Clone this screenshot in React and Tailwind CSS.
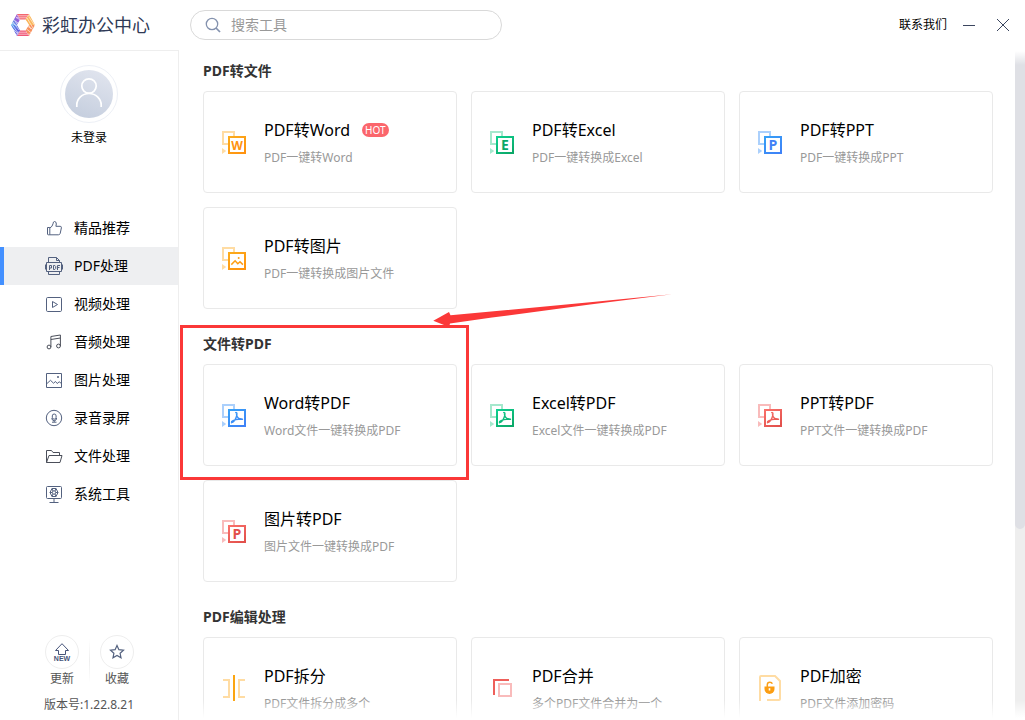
import React from "react";

const TONES = {
  orange: { from: "#fbab1c", to: "#ff930f", soft: "#ffdca3" },
  green: { from: "#0fd090", to: "#0ba868", soft: "#a5e8cd" },
  blue: { from: "#36a0f6", to: "#3f82f7", soft: "#abd0fc" },
  red: { from: "#f9706a", to: "#e2504b", soft: "#f9bbbb" },
};

const SECTIONS = [
  {
    title: "PDF转文件",
    tools: [
      { name: "PDF转Word", desc: "PDF一键转Word", tone: "orange", glyph: "W", hot: true },
      { name: "PDF转Excel", desc: "PDF一键转换成Excel", tone: "green", glyph: "E" },
      { name: "PDF转PPT", desc: "PDF一键转换成PPT", tone: "blue", glyph: "P" },
      { name: "PDF转图片", desc: "PDF一键转换成图片文件", tone: "orange", glyph: "image" },
    ],
  },
  {
    title: "文件转PDF",
    tools: [
      { name: "Word转PDF", desc: "Word文件一键转换成PDF", tone: "blue", glyph: "pdf", marked: true },
      { name: "Excel转PDF", desc: "Excel文件一键转换成PDF", tone: "green", glyph: "pdf" },
      { name: "PPT转PDF", desc: "PPT文件一键转换成PDF", tone: "red", glyph: "pdf" },
      { name: "图片转PDF", desc: "图片文件一键转换成PDF", tone: "red", glyph: "P" },
    ],
  },
  {
    title: "PDF编辑处理",
    tools: [
      { name: "PDF拆分", desc: "PDF文件拆分成多个", glyph: "split" },
      { name: "PDF合并", desc: "多个PDF文件合并为一个", glyph: "merge" },
      { name: "PDF加密", desc: "PDF文件添加密码", glyph: "lock" },
    ],
  },
];

function ConvertIcon({ tone, glyph }) {
  const t = TONES[tone];
  const id = `tone-${tone}`;
  const paint = `url(#${id})`;
  return (
    <svg className="h-6 w-6 shrink-0" viewBox="0 0 24 24" fill="none" aria-hidden="true">
      <defs>
        <linearGradient id={id} gradientUnits="userSpaceOnUse" x1="8" y1="6" x2="20" y2="24">
          <stop offset="0" stopColor={t.from} />
          <stop offset="1" stopColor={t.to} />
        </linearGradient>
      </defs>
      <rect x="1" y="2" width="11" height="12" stroke={t.soft} strokeWidth="2" />
      <path d="M0 18l4.2 3L0 24z" fill={t.soft} />
      <rect x="7" y="7" width="16" height="16" fill="#fff" stroke={paint} strokeWidth="2" />
      {glyph === "pdf" && (
        <path
          d="M13.7 9.6c1.6-.3 1.5 2 .5 4.6-.9 2.3-2.4 4.8-4.7 5.5M14.5 11.3c.5 2.9 2.5 5.1 6 4.9M9.6 18.6c2.4-1.7 6.700-2.700 10.800-2.500"
          stroke={paint}
          strokeWidth="1.4"
          strokeLinecap="round"
        />
      )}
      {glyph === "image" && (
        <>
          <path d="M9.3 18.6l3.8-3.8 2.7 3 2.2-2 2.9 2.8" stroke={paint} strokeWidth="1.5" />
          <circle cx="16.7" cy="12" r="1" fill={paint} />
        </>
      )}
      {glyph.length === 1 && (
        <text
          x="15"
          y="20"
          textAnchor="middle"
          fontSize={glyph === "W" ? 12 : 14}
          fontWeight="700"
          fontFamily="Open Sans, sans-serif"
          fill={t.to}
        >
          {glyph}
        </text>
      )}
    </svg>
  );
}

function ToolIcon({ tool }) {
  if (tool.glyph === "split") {
    return (
      <svg className="h-7 w-6 shrink-0" viewBox="0 0 24 28" fill="none" aria-hidden="true">
        <path d="M1 6h6v17H1M23 6h-6v17h6" stroke="#ffdca3" strokeWidth="2" />
        <path d="M12 1v26" stroke="#fba511" strokeWidth="2" />
      </svg>
    );
  }
  if (tool.glyph === "merge") {
    return (
      <svg className="h-6 w-6 shrink-0" viewBox="0 0 24 24" fill="none" aria-hidden="true">
        <path d="M4 19V4h15" stroke="#ee5f5a" strokeWidth="2" />
        <rect x="9" y="8" width="12" height="12" stroke="#f9bbbb" strokeWidth="2" />
      </svg>
    );
  }
  if (tool.glyph === "lock") {
    return (
      <svg className="h-7 w-6 shrink-0" viewBox="0 0 24 28" fill="none" aria-hidden="true">
        <path d="M3 26H2V3q0-1 1-1h14l5 5v18q0 1-1 1H9" stroke="#ffdca3" strokeWidth="2" />
        <path d="M9.3 13v-2.200q0-2.600 2.500-2.600 2 0 2.500 1.600" stroke="#fba01a" strokeWidth="1.5" />
        <path d="M6.500 12.500h10v2.500a5 5 0 0 1-10 0z" fill="#fb9d12" />
        <path d="M11.500 14.200v2.300" stroke="#fff" strokeWidth="1.6" />
      </svg>
    );
  }
  return <ConvertIcon tone={tool.tone} glyph={tool.glyph} />;
}

function Callout() {
  return (
    <div className="pointer-events-none">
      <div className="absolute -top-[39px] -right-3 -bottom-3.5 -left-[23px] border-3 border-[#fb3838]" />
      <svg
        className="absolute -top-[72px] left-[229px] h-9 w-[244px]"
        viewBox="0 0 244 36"
        aria-hidden="true"
      >
        <path d="M1.300 28.700L17 20l1.500 3.300L158 10.300 240 2.200 158 12.600 60 25.500 18 31.500 17 35z" fill="#fb3838" />
      </svg>
    </div>
  );
}

function ToolCard({ tool }) {
  return (
    <li className="relative">
      <button
        type="button"
        className="flex h-[102px] w-full items-center gap-[18px] rounded border border-[#e9e9e9] bg-white pr-2 pl-[18px] text-left"
      >
        <ToolIcon tool={tool} />
        <span className="flex min-w-0 flex-col gap-1.5 pt-0.5">
          <span className="flex items-center gap-3 text-base leading-6 text-black">
            {tool.name}
            {tool.hot && (
              <span className="rounded-full bg-[#fb666c] px-[3px] text-[10px] leading-[14px] text-white">HOT</span>
            )}
          </span>
          <span className="text-xs leading-5 text-[#999]">{tool.desc}</span>
        </span>
      </button>
      {tool.marked && <Callout />}
    </li>
  );
}

const NAV = [
  {
    label: "精品推荐",
    icon: (
      <>
        <path d="M2.500 8.500h2.300v7.300H3.300q-.8 0-.8-.8z" />
        <path d="M4.800 9q2.700-1.300 3.200-4.200.2-2.300 1.500-2.300 2 .2 1.800 2.500l-.4 2.300h4.300q1.400.1 1.200 1.500l-1.200 5.600q-.4 1.400-1.800 1.400H4.800" />
      </>
    ),
  },
  {
    label: "PDF处理",
    active: true,
    icon: (
      <>
        <path d="M3.500 5.500v-5h8l3 3v2M11.500.5v3h3M3.500 14.500v3h11v-3M1.500 5.500h15v9h-15zM.5 7.500v5M17.500 7.500v5" />
        <path d="M4.500 13V8.500h2v2.500h-2M8.500 8.500h1.300l.9.900v2.200l-.9.900H8.500zM12.500 13V8.500H15M12.500 10.500h2" />
      </>
    ),
  },
  {
    label: "视频处理",
    icon: (
      <>
        <rect x="1.5" y="2.5" width="15" height="14" rx="1.2" />
        <path d="M7.500 6.500v6l5-3z" />
      </>
    ),
  },
  {
    label: "音频处理",
    dark: true,
    icon: (
      <>
        <circle cx="4" cy="14" r="1.900" />
        <circle cx="13.500" cy="13" r="1.900" />
        <path d="M5.900 14V3.500L15.400 2v11M5.900 6.500L15.400 5" />
      </>
    ),
  },
  {
    label: "图片处理",
    icon: (
      <>
        <path d="M1.500 2.500h15v14h-15zM2 12.500l3.500-3.200 3 2.900 2-1.700 1.700 2 2-1.700 2.300 1.700" />
        <rect x="12.500" y="5.500" width="1" height="1" />
      </>
    ),
  },
  {
    label: "录音录屏",
    icon: (
      <>
        <circle cx="9" cy="9" r="7.700" />
        <rect x="7.300" y="5" width="3.800" height="5.200" rx="1.900" />
        <path d="M6.800 9q0 2.700 2.400 2.700T11.600 9M9.200 11.700V13M7 13.200h4.500" />
      </>
    ),
  },
  {
    label: "文件处理",
    dark: true,
    icon: <path d="M1.500 15.500v-12h5L8 5.500h6.500v3M1.500 15.500l2.500-7h13l-2 7z" />,
  },
  {
    label: "系统工具",
    icon: (
      <>
        <rect x="1.5" y="1.5" width="15" height="12" rx="1" />
        <path d="M9 13.500v3.500M4.500 17.500h9" />
        <circle cx="9" cy="7.500" r="1.700" />
        <path d="M7 3.500h4l2 4-2 4H7l-2-4zM7 3.500l1 2.500M11 3.500L10 6M13 7.500h-2.300M7.300 7.500H5M8 9l-1 2.500M10 9l1 2.500" />
      </>
    ),
  },
];

function Logo() {
  return (
    <svg className="h-6 w-6" viewBox="0 0 24 24" aria-hidden="true">
      <defs>
        <linearGradient id="logo-a" x1="0" y1="1" x2="1" y2="0">
          <stop offset="0" stopColor="#35b6f0" />
          <stop offset=".5" stopColor="#8a63dd" />
          <stop offset="1" stopColor="#b44bc0" />
        </linearGradient>
        <linearGradient id="logo-b" x1="0" y1="0" x2="1" y2="1">
          <stop offset="0" stopColor="#4f9bf0" />
          <stop offset="1" stopColor="#6a3bd6" />
        </linearGradient>
      </defs>
      <path d="M6 1h12l-3.500 5.500H9z" fill="#f4666e" />
      <path d="M18 1l6 11h-6l-3.500-5.500z" fill="#fbb65a" />
      <path d="M24 12l-6 11-3.500-5.500L18 12z" fill="#f8905c" />
      <path d="M18 23H6l3-5.500h5.500z" fill="#ef5878" />
      <path d="M6 23L0 12h6l3 5.500z" fill="url(#logo-b)" />
      <path d="M0 12L6 1l3 5.500L6 12z" fill="url(#logo-a)" />
      <path
        d="M6 2.800h13M5 4.800h11M6 19.200h10M5 21.200h14M16 5l6 10M18 4l6 9M15 8l5 8M20 3l4 7M15.500 16l5 4M17 13.500l5 3M2 9l6 8M0 10l7 10M4 8l4 6M0 14l7 7M3 7l4 3M5 4l4 3M1 10l5 3"
        stroke="#fff"
        strokeWidth=".8"
        opacity=".75"
      />
    </svg>
  );
}

function Header() {
  return (
    <header className="flex h-[51px] shrink-0 items-start">
      <div className="flex h-full w-[179px] shrink-0 items-center gap-[7px] border-b border-[#eee] pl-[11px]">
        <Logo />
        <h1 className="text-lg leading-6 text-[#2f3a56]">彩虹办公中心</h1>
      </div>
      <div className="flex h-[50px] flex-1 items-center justify-between pr-4 pl-[11px]">
        <label className="flex h-[30px] w-[312px] items-center gap-2.5 rounded-full border border-[#d9d9d9] pr-4 pl-[14px]">
          <svg className="h-4 w-4 shrink-0" viewBox="0 0 16 16" fill="none" stroke="#8492ae" strokeWidth="1.3" aria-hidden="true">
            <circle cx="7" cy="7" r="5.700" />
            <path d="M11 11l4 4" strokeWidth="1.7" />
          </svg>
          <input
            type="text"
            aria-label="搜索工具"
            placeholder="搜索工具"
            className="w-full min-w-0 bg-transparent text-sm leading-5 text-[#333] outline-none placeholder:text-[#999]"
          />
        </label>
        <div className="flex items-center">
          <a href="#contact" className="text-xs leading-5 text-black">联系我们</a>
          <button type="button" aria-label="最小化" className="ml-4">
            <svg className="h-3 w-3" viewBox="0 0 12 12" aria-hidden="true">
              <path d="M0 6.500h12" stroke="#3b465f" />
            </svg>
          </button>
          <button type="button" aria-label="关闭" className="ml-[22px]">
            <svg className="h-3 w-3" viewBox="0 0 12 12" aria-hidden="true">
              <path d="M0 0l12 12M12 0L0 12" stroke="#3b465f" />
            </svg>
          </button>
        </div>
      </div>
    </header>
  );
}

function Sidebar() {
  return (
    <aside className="flex w-[179px] shrink-0 flex-col border-r border-[#eee]">
      <button type="button" className="mt-3.5 flex flex-col items-center">
        <span className="flex h-[58px] w-[58px] items-center justify-center rounded-full border border-[#edf0f6]">
          <svg className="h-12 w-12" viewBox="0 0 48 48" fill="none" aria-hidden="true">
            <defs>
              <linearGradient id="avatar" x1=".7" y1="0" x2=".3" y2="1">
                <stop offset="0" stopColor="#e0e4ee" />
                <stop offset="1" stopColor="#c5cede" />
              </linearGradient>
            </defs>
            <circle cx="24" cy="24" r="24" fill="url(#avatar)" />
            <circle cx="24" cy="16" r="7.200" stroke="#fff" strokeWidth="1.7" />
            <path d="M11.800 37v-2a12.200 11.500 0 0 1 24.400 0v2" stroke="#fff" strokeWidth="1.7" />
          </svg>
        </span>
        <span className="mt-[5px] text-xs leading-5 text-black">未登录</span>
      </button>
      <nav className="mt-[61px]">
        {NAV.map((item) => (
          <a
            key={item.label}
            href="#tools"
            aria-current={item.active ? "page" : undefined}
            className={`flex h-[38px] items-center gap-[11px] border-l-4 pl-[41px] text-sm leading-5 text-black ${
              item.active ? "border-[#4390ff] bg-[#eeeff1]" : "border-transparent"
            }`}
          >
            <svg
              className="h-[18px] w-[18px] shrink-0"
              viewBox="0 0 18 18"
              fill="none"
              stroke={item.dark ? "#4b4f5a" : "#53617f"}
              strokeLinejoin="round"
              aria-hidden="true"
            >
              {item.icon}
            </svg>
            {item.label}
          </a>
        ))}
      </nav>
      <div className="mt-auto flex items-start justify-center gap-2.5 pl-px">
        <button type="button" className="flex flex-col items-center">
          <span className="flex h-[34px] w-[34px] items-center justify-center rounded-full border border-[#eee]">
            <svg className="h-[18px] w-[18px]" viewBox="0 0 18 18" fill="none" stroke="#47557a" aria-hidden="true">
              <path d="M9 .7L2.500 7.500h3v4h7v-4h3z" />
              <text x="9" y="18" textAnchor="middle" fontSize="7" fontWeight="700" fontFamily="Liberation Sans, sans-serif" fill="#47557a" stroke="none">NEW</text>
            </svg>
          </span>
          <span className="text-xs leading-5 text-[#555]">更新</span>
        </button>
        <span className="mt-1 h-11 w-px bg-linear-to-b from-white via-[#eee] to-white" />
        <button type="button" className="flex flex-col items-center">
          <span className="flex h-[34px] w-[34px] items-center justify-center rounded-full border border-[#eee]">
            <svg className="h-4 w-4" viewBox="0 0 16 16" fill="none" stroke="#53617f" strokeWidth="1.2" aria-hidden="true">
              <path d="M8 1.500l1.900 4.200 4.600.5-3.400 3.100.9 4.500L8 11.500l-4 2.300.9-4.500L1.500 6.200l4.600-.5z" />
            </svg>
          </span>
          <span className="text-xs leading-5 text-[#555]">收藏</span>
        </button>
      </div>
      <p className="mt-1.5 mb-[5px] text-center text-xs leading-5 text-[#555]">版本号:1.22.8.21</p>
    </aside>
  );
}

export default function App() {
  return (
    <div className="flex h-screen flex-col overflow-hidden bg-white font-['Noto_Sans','Noto_Sans_CJK_SC',sans-serif]">
      <Header />
      <div className="relative flex min-h-0 flex-1">
        <Sidebar />
        <main className="flex min-w-0 flex-1 flex-col gap-[25px] overflow-y-auto pt-2.5 pr-[22px] pb-6 pl-6 [scrollbar-width:none]">
          {SECTIONS.map((section) => (
            <section key={section.title}>
              <h2 className="text-sm leading-5 font-bold text-[#333]">{section.title}</h2>
              <ul className="mt-2.5 grid grid-cols-3 gap-3.5">
                {section.tools.map((tool) => (
                  <ToolCard key={tool.name} tool={tool} />
                ))}
              </ul>
            </section>
          ))}
        </main>
        <div className="w-2.5 shrink-0 bg-[#eee]" aria-hidden="true">
          <div className="h-[71.5%] rounded-b-full bg-[#dfe0e5]" />
        </div>
        <div className="pointer-events-none absolute top-0 right-0 left-[179px] h-3.5 bg-linear-to-b from-white to-white/0" />
        <div className="pointer-events-none absolute right-0 bottom-0 left-[179px] h-5 bg-linear-to-t from-white from-10% to-white/0" />
      </div>
    </div>
  );
}
